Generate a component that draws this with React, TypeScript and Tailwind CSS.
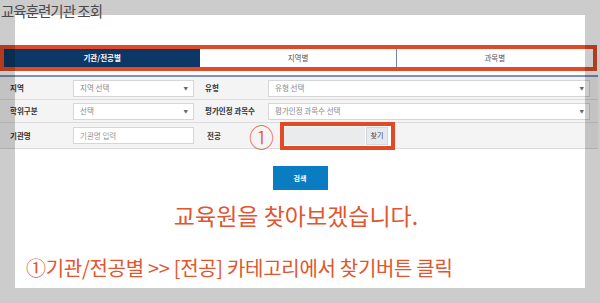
import React from "react";

const font = { fontFamily: '"Noto Sans CJK KR", "Noto Sans", sans-serif' };

function Select({ text, w }: { text: string; w: string }) {
  return (
    <div className={`${w} h-[17px] bg-white border border-[#d6d6d6] flex items-center justify-between pl-[6px] pr-[5px]`}>
      <span className="text-[7.5px] text-[#888] leading-none">{text}</span>
      <span className="text-[4.5px] text-[#666] leading-none">▼</span>
    </div>
  );
}

export default function App() {
  return (
    <div className="relative w-[600px] h-[303px] bg-white overflow-hidden" style={font}>
      <div className="relative z-10 h-[45px] pl-[1px] text-[14.5px] leading-[22px] tracking-[-1px] text-[#4a4a4a]">
        교육훈련기관 조회
      </div>

      {/* tabs */}
      <div className="w-[597px] h-[26px] border-4 border-[#e04a26] grid grid-cols-3 bg-white">
        <div className="bg-[#0c3766] text-white text-[7.5px] font-bold flex items-center justify-center">기관/전공별</div>
        <div className="text-[#555] text-[7.5px] flex items-center justify-center border-r border-[#6d86a8]">지역별</div>
        <div className="text-[#555] text-[7.5px] flex items-center justify-center">과목별</div>
      </div>

      <div className="mt-[4px] h-[2px] w-[598px] bg-[#8093b2]" />

      {/* form rows */}
      <div className="w-[598px] text-[7.5px]">
        <div className="flex items-center h-[23px] bg-[#f4f4f4] border-b border-[#dcdcdc]">
          <div className="w-[65px] pl-[10px] font-bold text-[#333]">지역</div>
          <div className="w-[135px] pl-[8px]"><Select text="지역 선택" w="w-[121px]" /></div>
          <div className="w-[63px] pl-[5px] font-bold text-[#333]">유형</div>
          <div className="flex-1 pl-[5px] pr-[8px]"><Select text="유형 선택" w="w-full" /></div>
        </div>
        <div className="flex items-center h-[23px] bg-[#f4f4f4] border-b border-[#dcdcdc]">
          <div className="w-[65px] pl-[10px] font-bold text-[#333]">학위구분</div>
          <div className="w-[135px] pl-[8px]"><Select text="선택" w="w-[121px]" /></div>
          <div className="w-[63px] pl-[5px] font-bold text-[#333] whitespace-nowrap">평가인정 과목수</div>
          <div className="flex-1 pl-[5px] pr-[8px]"><Select text="평가인정 과목수 선택" w="w-full" /></div>
        </div>
        <div className="flex items-center h-[26px] bg-[#f4f4f4] border-b border-[#dcdcdc]">
          <div className="w-[65px] pl-[10px] font-bold text-[#333]">기관명</div>
          <div className="w-[135px] pl-[8px]">
            <div className="w-[121px] h-[17px] bg-white border border-[#d6d6d6] flex items-center pl-[6px] text-[#999]">기관명 입력</div>
          </div>
          <div className="w-[49px] pl-[7px] font-bold text-[#333]">전공</div>
          <div className="w-[31px] text-[25px] leading-none text-[#e05a33] font-light mt-[2px]">①</div>
          <div className="relative">
            <div className="absolute left-0 -top-[14px] w-[115px] h-[28px] border-4 border-[#e04a26] bg-white flex items-center pr-[2px]">
              <div className="w-[81px] h-[18px] bg-[#e9ebec]" />
              <div className="ml-[1px] w-[22px] h-[18px] bg-[#e6e9ee] border border-[#d3d8de] flex items-center justify-center text-[#444] text-[7px]">찾기</div>
            </div>
          </div>
        </div>
      </div>

      <div className="mt-[17px] mx-auto w-[55px] h-[24px] bg-[#0a7cc1] flex items-center justify-center text-white text-[7px] font-bold">
        검색
      </div>

      <div className="mt-[11px] text-center pr-[8px] text-[23px] leading-[28px] text-[#e2552e]">
        교육원을 찾아보겠습니다.
      </div>

      <div className="mt-[26px] pl-[26px] text-[20px] leading-[26px] text-[#e2552e] tracking-[-0.3px]">
        ①기관/전공별 &gt;&gt; [전공] 카테고리에서 찾기버튼 클릭
      </div>

      <div className="absolute inset-0 border-[15px] border-black/20 pointer-events-none" />
    </div>
  );
}
